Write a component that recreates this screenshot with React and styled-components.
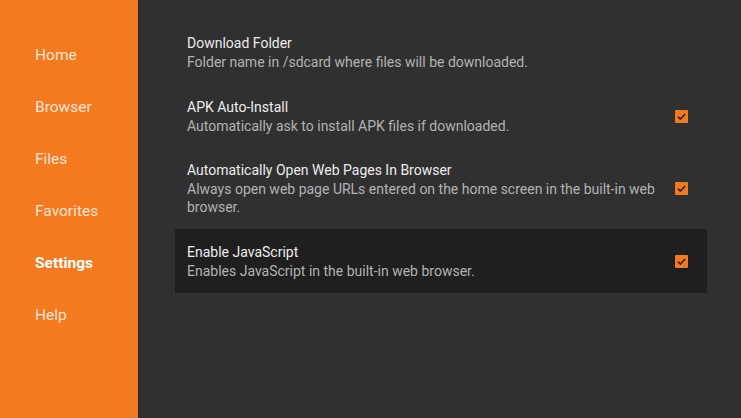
import styled, { createGlobalStyle } from 'styled-components';

const GlobalStyle = createGlobalStyle`
    html, body {
        margin: 0;
        padding: 0;
        background: #303030;
    }
    body {
        font-family: Roboto, "Noto Sans", sans-serif;
    }
`;

const Page = styled.div`
    display: flex;
    width: 741px;
    height: 418px;
    overflow: hidden;
`;

const Sidebar = styled.nav`
    width: 138px;
    flex-shrink: 0;
    background: #f47a20;
    display: flex;
    flex-direction: column;
    padding-top: 44px;
    box-sizing: border-box;
`;

const NavItem = styled.div`
    height: 52px;
    line-height: 22px;
    padding-left: 35px;
    font-size: 15.5px;
    font-weight: ${(props) => props.active ? 700 : 400};
    color: ${(props) => props.active ? '#ffffff' : 'rgba(255, 255, 255, 0.82)'};
`;

const Main = styled.main`
    flex: 1;
    background: #303030;
    padding: 20px 34px 0 37px;
    display: flex;
    flex-direction: column;
`;

const Row = styled.div`
    display: flex;
    align-items: center;
    box-sizing: border-box;
    min-height: 64px;
    padding: 13px 19px 12px 12px;
    background: ${(props) => props.focused ? '#1f1f1f' : 'transparent'};
    border-bottom: 1px dotted ${(props) => props.last ? 'transparent' : 'rgba(255, 255, 255, 0.035)'};
`;

const Text = styled.div`
    flex: 1;
    max-width: 478px;
    margin-right: auto;
`;

const Title = styled.div`
    font-size: 14px;
    line-height: 19px;
    color: #ececec;
`;

const Subtitle = styled.div`
    font-size: 14px;
    line-height: 18px;
    color: #b3b3b3;
`;

const Box = styled.div`
    width: 13px;
    height: 13px;
    border-radius: 1px;
    background: #f47a20;
    display: flex;
    align-items: center;
    justify-content: center;
    flex-shrink: 0;
`;

function Checkbox() {
    return (
        <Box>
            <svg width="11" height="11" viewBox="0 0 11 11">
                <path d="M2 5.6 L4.4 8 L9.2 3" fill="none" stroke="#2a2a2a" strokeWidth="1.6" />
            </svg>
        </Box>
    );
}

const navItems = ['Home', 'Browser', 'Files', 'Favorites', 'Settings', 'Help'];

const settings = [
    { title: 'Download Folder', desc: 'Folder name in /sdcard where files will be downloaded.', check: false },
    { title: 'APK Auto-Install', desc: 'Automatically ask to install APK files if downloaded.', check: true },
    { title: 'Automatically Open Web Pages In Browser', desc: 'Always open web page URLs entered on the home screen in the built-in web browser.', check: true },
    { title: 'Enable JavaScript', desc: 'Enables JavaScript in the built-in web browser.', check: true, focused: true },
];

export default function App() {
    return (
        <>
            <GlobalStyle />
            <Page>
                <Sidebar>
                    {navItems.map((n) => (
                        <NavItem key={n} active={n === 'Settings'}>{n}</NavItem>
                    ))}
                </Sidebar>
                <Main>
                    {settings.map((s, i) => (
                        <Row key={s.title} focused={s.focused} last={i >= settings.length - 2}>
                            <Text>
                                <Title>{s.title}</Title>
                                <Subtitle>{s.desc}</Subtitle>
                            </Text>
                            {s.check && <Checkbox />}
                        </Row>
                    ))}
                </Main>
            </Page>
        </>
    );
}
